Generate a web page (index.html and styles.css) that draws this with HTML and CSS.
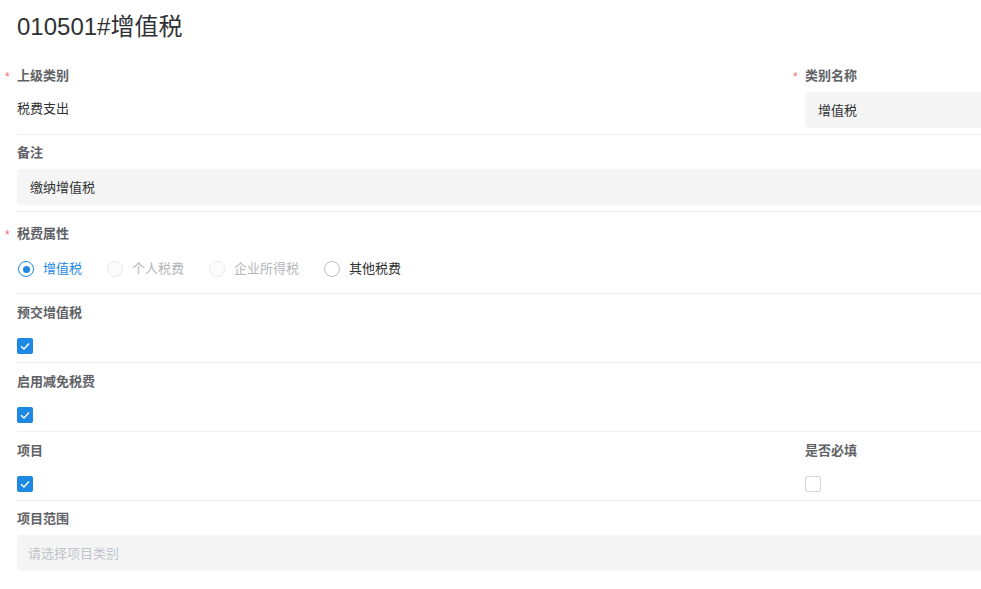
FILE: index.html
```
<!DOCTYPE html>
<html lang="zh-CN">
<head>
  <meta charset="UTF-8">
  <meta name="viewport" content="width=device-width, initial-scale=1.0">
  <title>010501#增值税</title>
  <link rel="stylesheet" href="styles.css">
</head>
<body>
  <div class="page">
    <div class="page__inner">
      <h1 class="page__title">010501#增值税</h1>

      <div class="form__row form__row_two">
        <div class="field">
          <label class="field__label _required">上级类别</label>
          <div class="field__text">税费支出</div>
        </div>
        <div class="field">
          <label class="field__label _required">类别名称</label>
          <div class="field__input">增值税</div>
        </div>
      </div>

      <div class="form__row">
        <div class="field">
          <label class="field__label">备注</label>
          <div class="field__input">缴纳增值税</div>
        </div>
      </div>

      <div class="form__row">
        <div class="field field_radio">
          <label class="field__label _required">税费属性</label>
          <div class="radio__group">
            <span class="radio _checked"><span class="radio__dot"></span>增值税</span>
            <span class="radio _disabled"><span class="radio__dot"></span>个人税费</span>
            <span class="radio _disabled"><span class="radio__dot"></span>企业所得税</span>
            <span class="radio"><span class="radio__dot"></span>其他税费</span>
          </div>
        </div>
      </div>

      <div class="form__row">
        <div class="field field_check">
          <label class="field__label">预交增值税</label>
          <div class="check__wrap">
            <span class="checkbox _checked">
              <svg viewBox="0 0 16 16" width="16" height="16"><polyline points="4,8.2 7,11 12,5.5" fill="none" stroke="#fff" stroke-width="1.4"/></svg>
            </span>
          </div>
        </div>
      </div>

      <div class="form__row">
        <div class="field field_check">
          <label class="field__label">启用减免税费</label>
          <div class="check__wrap">
            <span class="checkbox _checked">
              <svg viewBox="0 0 16 16" width="16" height="16"><polyline points="4,8.2 7,11 12,5.5" fill="none" stroke="#fff" stroke-width="1.4"/></svg>
            </span>
          </div>
        </div>
      </div>

      <div class="form__row form__row_two">
        <div class="field field_check">
          <label class="field__label">项目</label>
          <div class="check__wrap">
            <span class="checkbox _checked">
              <svg viewBox="0 0 16 16" width="16" height="16"><polyline points="4,8.2 7,11 12,5.5" fill="none" stroke="#fff" stroke-width="1.4"/></svg>
            </span>
          </div>
        </div>
        <div class="field field_check">
          <label class="field__label">是否必填</label>
          <div class="check__wrap">
            <span class="checkbox"></span>
          </div>
        </div>
      </div>

      <div class="form__row form__row_last">
        <div class="field">
          <label class="field__label">项目范围</label>
          <div class="field__input _placeholder">请选择项目类别</div>
        </div>
      </div>
    </div>
  </div>
</body>
</html>
```

FILE: styles.css
```
html, body {
  margin: 0;
  padding: 0;
  overflow: hidden;
  background: #fff;
}

body {
  font-family: "Liberation Sans", "Noto Sans CJK SC", sans-serif;
  font-size: 13px;
  color: #303133;
}

.page {
  width: 100%;
  overflow: hidden;
}

.page__inner {
  width: 1200px;
  padding: 11px 0 0 17px;
}

.page__title {
  margin: 0 0 15px;
  font-size: 24px;
  line-height: 32px;
  font-weight: normal;
  color: #303133;
}

.form__row {
  border-bottom: 1px solid #eeeff2;
}

.form__row_last {
  border-bottom: none;
}

.form__row_two {
  display: grid;
  grid-template-columns: 788px 1fr;
}

.field {
  padding: 8px 0 6px;
}

.field__label {
  position: relative;
  display: block;
  height: 20px;
  line-height: 20px;
  font-weight: bold;
  color: #606266;
}

.field__label._required::before {
  content: "*";
  position: absolute;
  left: -12px;
  top: 1px;
  color: #f56c6c;
  font-weight: normal;
  font-size: 12px;
}

.field__text {
  margin-top: 6px;
  height: 36px;
  line-height: 34px;
}

.field__input {
  margin-top: 6px;
  height: 36px;
  line-height: 38px;
  padding: 0 13px;
  background: #f5f5f5;
  border-radius: 4px;
}

.field__input._placeholder {
  color: #c0c4cc;
  padding-left: 11px;
}

.field_radio {
  padding: 12px 0 7px;
}

.radio__group {
  display: flex;
  align-items: center;
  gap: 25px;
  margin: 8px 0 0 1px;
  height: 34px;
}

.radio {
  display: flex;
  align-items: center;
  gap: 9px;
  line-height: 20px;
  color: #303133;
}

.radio__dot {
  box-sizing: border-box;
  display: flex;
  align-items: center;
  justify-content: center;
  width: 16px;
  height: 16px;
  border: 1px solid #bfbfbf;
  border-radius: 50%;
  background: #fff;
}

.radio._checked {
  color: #1e88e5;
}

.radio._checked .radio__dot {
  border-color: #1e88e5;
}

.radio._checked .radio__dot::after {
  content: "";
  width: 7px;
  height: 7px;
  border-radius: 50%;
  background: #1e88e5;
}

.radio._disabled {
  color: #b4b6ba;
}

.radio._disabled .radio__dot {
  border-color: #e6e8ec;
  background: #fcfcfc;
}

.field_check {
  padding: 9px 0 0;
}

.check__wrap {
  display: flex;
  align-items: center;
  margin-top: 7px;
  height: 32px;
}

.checkbox {
  box-sizing: border-box;
  display: block;
  width: 16px;
  height: 16px;
  border: 1px solid #d4d6db;
  border-radius: 2px;
  background: #fff;
}

.checkbox._checked {
  border: none;
  background: #1e88e5;
}

.checkbox svg {
  display: block;
}
```
